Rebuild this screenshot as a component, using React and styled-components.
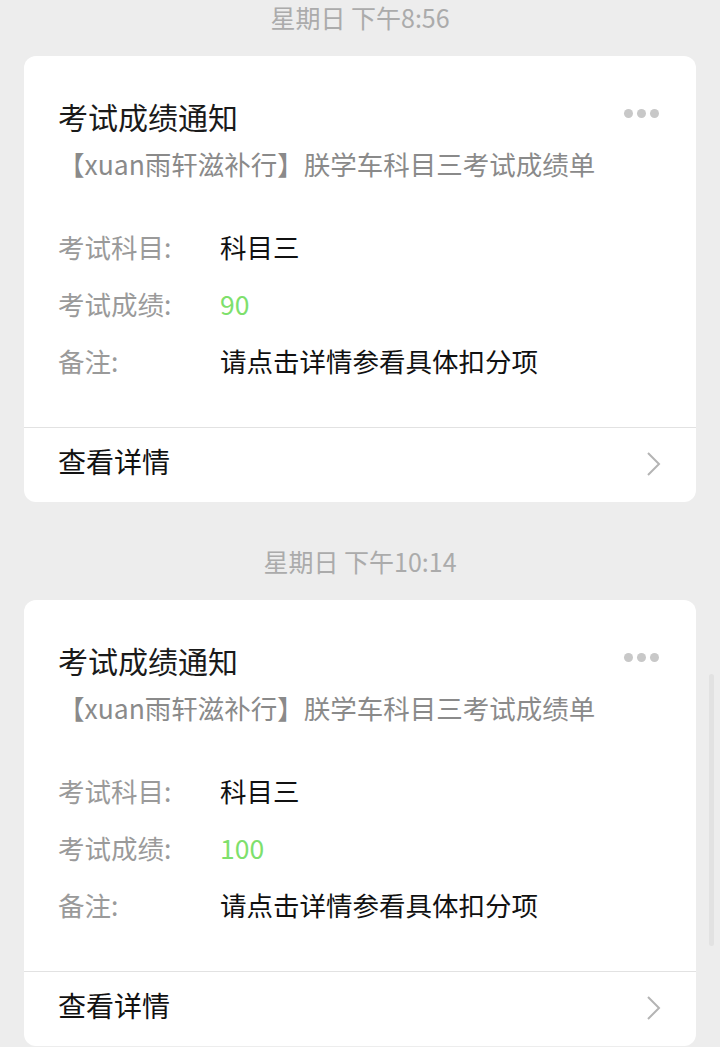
import React from "react";
import styled, { createGlobalStyle } from "styled-components";

// 考试成绩通知 消息列表
const messages = [
  {
    time: "星期日 下午8:56",
    title: "考试成绩通知",
    desc: "【xuan雨轩滋补行】朕学车科目三考试成绩单",
    subject: "科目三",
    score: "90",
    remark: "请点击详情参看具体扣分项",
  },
  {
    time: "星期日 下午10:14",
    title: "考试成绩通知",
    desc: "【xuan雨轩滋补行】朕学车科目三考试成绩单",
    subject: "科目三",
    score: "100",
    remark: "请点击详情参看具体扣分项",
  },
];

function App() {
  return (
    <>
      <GlobalStyle />
      <Page>
        {messages.map((m, i) => (
          <Section key={i}>
            <Time>{m.time}</Time>
            <Card>
              <Header>
                <TitleRow>
                  <Title>{m.title}</Title>
                  <Dots>
                    <i />
                    <i />
                    <i />
                  </Dots>
                </TitleRow>
                <Desc>{m.desc}</Desc>
              </Header>
              <Fields>
                <Field>
                  <Label>考试科目:</Label>
                  <Value>{m.subject}</Value>
                </Field>
                <Field>
                  <Label>考试成绩:</Label>
                  <Value $green>{m.score}</Value>
                </Field>
                <Field>
                  <Label>备注:</Label>
                  <Value>{m.remark}</Value>
                </Field>
              </Fields>
              <Footer>
                <span>查看详情</span>
                <svg width="16" height="26" viewBox="0 0 16 26">
                  <polyline
                    points="2,2 13,13 2,24"
                    fill="none"
                    stroke="#b4b4b4"
                    strokeWidth="2"
                  />
                </svg>
              </Footer>
            </Card>
          </Section>
        ))}
      </Page>
      <ScrollBar />
    </>
  );
}

export default App;

const GlobalStyle = createGlobalStyle`
  body {
    margin: 0;
    background: #ededed;
    font-family: "Noto Sans CJK SC", "Noto Sans", sans-serif;
  }
`;

const Page = styled.div`
  display: flex;
  flex-direction: column;
  gap: 42px;
  padding: 0 24px;
  height: 1047px;
  overflow: hidden;
`;

const Section = styled.div`
  display: flex;
  flex-direction: column;
`;

const Time = styled.div`
  box-sizing: border-box;
  height: 34px;
  padding-top: 4px;
  line-height: 26px;
  margin-bottom: 22px;
  text-align: center;
  font-size: 25px;
  color: #ababab;
`;

const Card = styled.div`
  background: #fff;
  border-radius: 12px;
  overflow: hidden;
`;

const Header = styled.div`
  padding: 40px 37px 0 34px;
`;

const TitleRow = styled.div`
  display: flex;
  justify-content: space-between;
  align-items: center;
`;

const Title = styled.div`
  font-size: 30px;
  line-height: 40px;
  color: #1a1a1a;
`;

const Dots = styled.div`
  display: flex;
  gap: 4px;
  margin-top: -6px;
  i {
    width: 9px;
    height: 9px;
    border-radius: 50%;
    background: #c8c8c8;
  }
`;

const Desc = styled.div`
  margin-top: 8px;
  font-size: 26.5px;
  line-height: 40px;
  color: #8a8a8a;
`;

const Fields = styled.div`
  display: flex;
  flex-direction: column;
  gap: 17px;
  padding: 43px 34px 46px;
`;

const Field = styled.div`
  display: flex;
  font-size: 26.5px;
  line-height: 40px;
`;

const Label = styled.div`
  width: 162px;
  flex-shrink: 0;
  color: #9a9a9a;
`;

const Value = styled.div`
  color: ${(p) => (p.$green ? "#7ee06c" : "#111")};
`;

const Footer = styled.div`
  box-sizing: border-box;
  display: flex;
  justify-content: space-between;
  align-items: center;
  height: 75px;
  padding: 0 34px 8px;
  border-top: 1.5px solid #e2e2e2;
  font-size: 28px;
  color: #111;
  svg {
    margin-top: 6px;
  }
`;

const ScrollBar = styled.div`
  position: fixed;
  right: 6px;
  top: 674px;
  width: 5px;
  height: 272px;
  border-radius: 3px;
  background: #e2e2e2;
`;
